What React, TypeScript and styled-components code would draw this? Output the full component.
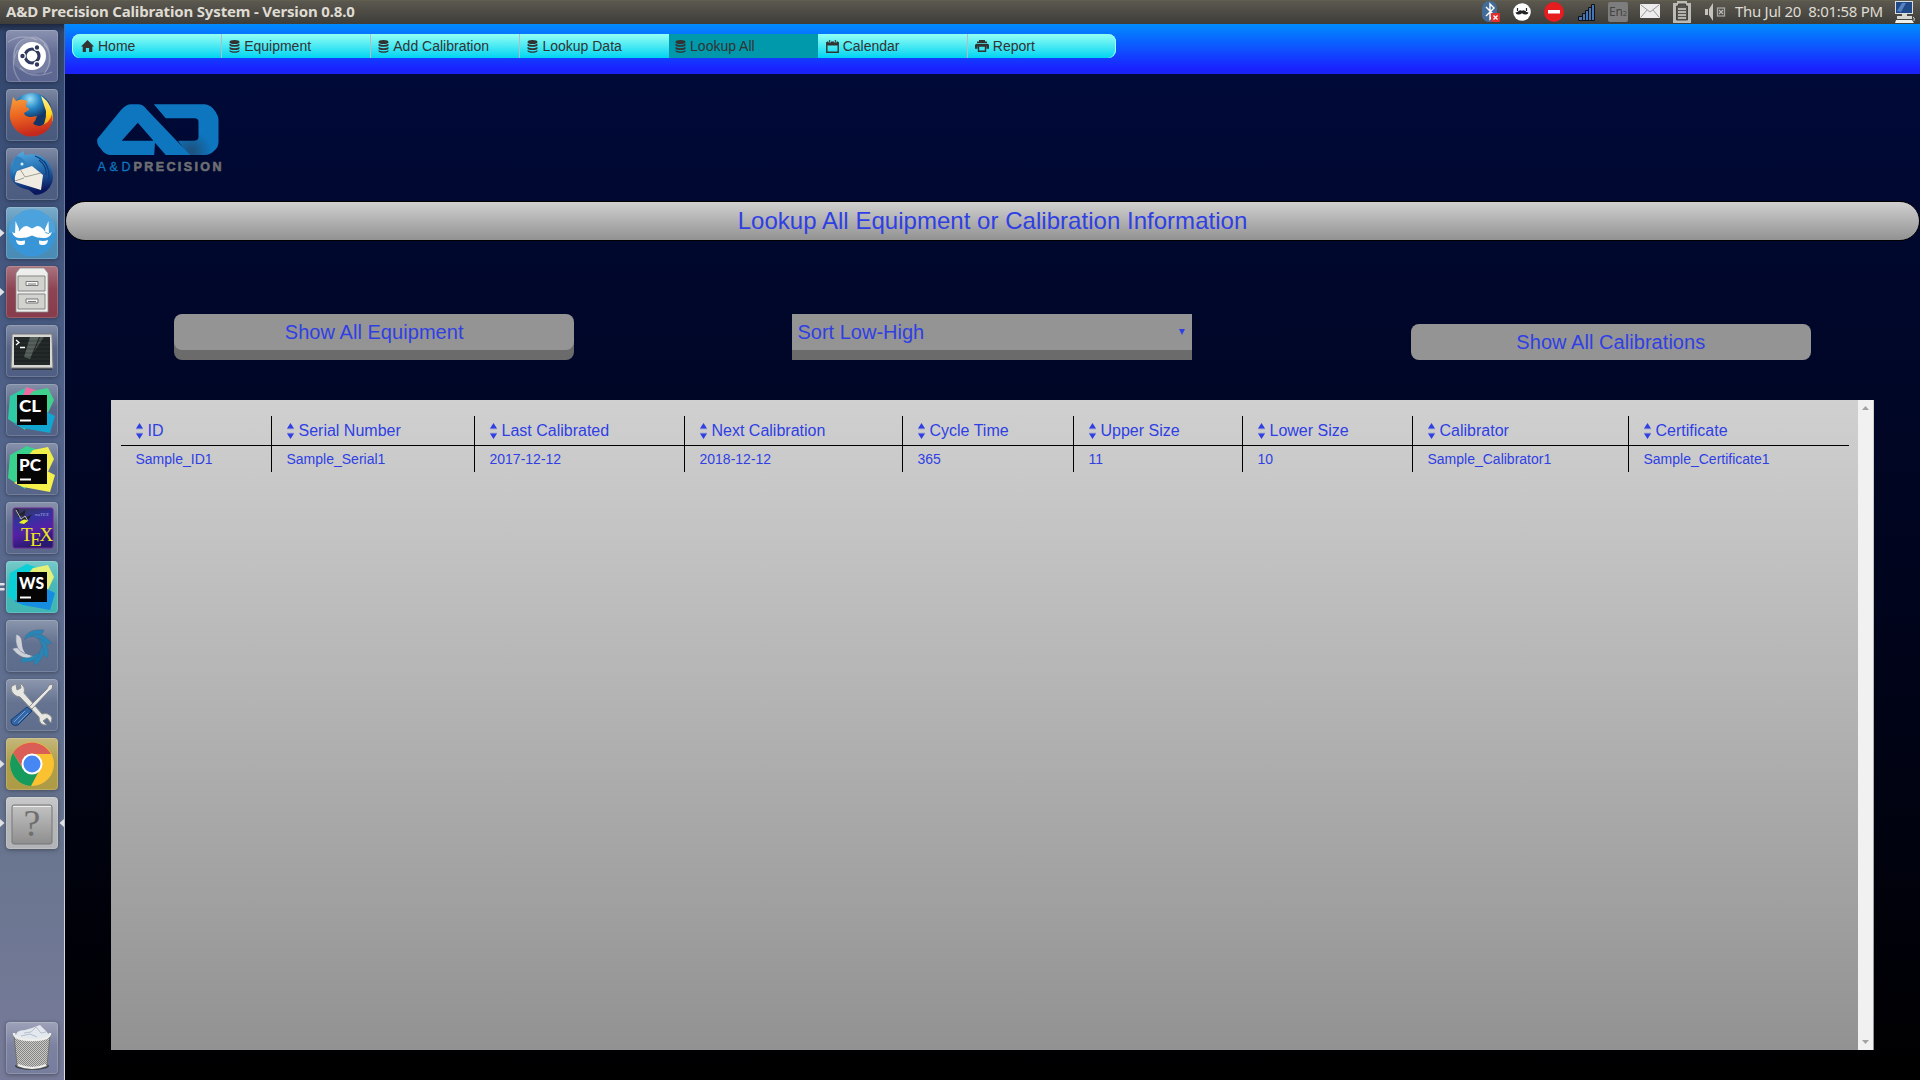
import React from 'react';
import styled, { createGlobalStyle } from 'styled-components';

const ink = '#2f3fe4';

const Global = createGlobalStyle`
  * { box-sizing: border-box; }
  html, body { margin: 0; padding: 0; overflow: hidden; background: #000; }
  body { font-family: "Liberation Sans", Arial, sans-serif; }
  button { font-family: inherit; border: 0; padding: 0; margin: 0; }
  svg { display: block; flex: none; }
`;

const Desktop = styled.div`
  width: 1920px;
  height: 1080px;
  display: flex;
  flex-direction: column;
  overflow: hidden;
`;

const Panel = styled.header`
  height: 24px;
  flex: none;
  display: flex;
  align-items: center;
  justify-content: space-between;
  padding: 0 5px 0 6px;
  background: linear-gradient(#66644f 0, #5b584f 1px, #3e3d39 24px);
  color: #dfdbd2;
  font-family: "Noto Sans", "Open Sans", sans-serif;
`;

const WindowTitle = styled.div`
  font-size: 15px;
  line-height: 23px;
  height: 24px;
  font-weight: 700;
  letter-spacing: -0.16px;
  white-space: nowrap;
`;

const Tray = styled.div`
  display: flex;
  align-items: center;
  height: 24px;
`;

const Clock = styled.div`
  width: 149px;
  height: 24px;
  margin: 0 11px 0 9px;
  font-size: 15px;
  line-height: 23px;
  letter-spacing: -0.3px;
  white-space: pre;
`;

const Workspace = styled.div`
  flex: 1;
  min-height: 0;
  display: flex;
`;

const Launcher = styled.nav`
  width: 65px;
  flex: none;
  display: flex;
  flex-direction: column;
  gap: 7px;
  padding: 6px 0 6px 6px;
  border-right: 1px solid;
  border-image: linear-gradient(#536a94, #8d97ae 50%, #dcdfe6 90%) 1;
  background: linear-gradient(#1c2740 0, #31456b 8px, #3b4f77 120px, #52638a 400px, #5e6e90 620px, #69758f 830px, #777b99 100%);
`;

const Tile = styled.div<{ $tint: string; $last?: boolean }>`
  position: relative;
  width: 52px;
  height: 52px;
  flex: none;
  margin-top: ${(p) => (p.$last ? 'auto' : '0')};
  border-radius: 4px;
  background: linear-gradient(rgba(255, 255, 255, 0.3), rgba(255, 255, 255, 0.06) 45%, rgba(255, 255, 255, 0.02)), ${(p) => p.$tint};
  box-shadow: inset 0 0 0 1px rgba(255, 255, 255, 0.17), 0 1px 4px rgba(0, 0, 0, 0.35);
`;

const Pip = styled.svg<{ $side: 'left' | 'right' }>`
  position: absolute;
  top: 21px;
  ${(p) => (p.$side === 'left' ? 'left: -6px;' : 'right: -6px;')}
`;

const Page = styled.main`
  flex: 1;
  min-width: 0;
  display: flex;
  flex-direction: column;
  background: linear-gradient(#000a38 50px, #00072b 260px, #00041c 55%, #000);
`;

const NavStrip = styled.div`
  height: 50px;
  flex: none;
  padding: 10px 7px 0;
  background: linear-gradient(#008cff, #1a22ff 90%, #1a22f4);
`;

const Menu = styled.div`
  width: 1044px;
  height: 24px;
  display: grid;
  grid-template-columns: repeat(7, 1fr);
  overflow: hidden;
  border-radius: 8px;
  background: linear-gradient(#94fff4, #00d4f2);
  box-shadow: inset 1px 0 #a5fbf6, inset -1px 0 #a5fbf6;
`;

const MenuItem = styled.div<{ $active?: boolean; $rule?: boolean }>`
  display: flex;
  align-items: center;
  gap: 4px;
  padding-left: ${(p) => (p.$active ? '6.5px' : p.$rule ? '7px' : '8px')};
  color: #333;
  font-size: 14px;
  line-height: 24px;
  white-space: nowrap;
  background: ${(p) => (p.$active ? '#0099ab' : 'none')};
  border-left: ${(p) => (p.$rule ? '1px solid #b5bcbf' : '0')};
  &:first-child { padding-left: 9px; }
`;

const Brand = styled.div`
  padding: 29px 0 0 31px;
  height: 127px;
  flex: none;
`;

const Banner = styled.h1`
  height: 40px;
  flex: none;
  margin: 0;
  border: 1px solid #000;
  border-radius: 20px;
  background: linear-gradient(#d0d0d0, #929292);
  color: ${ink};
  font-size: 24px;
  font-weight: 400;
  letter-spacing: 0.03px;
  line-height: 38px;
  text-align: center;
`;

const Controls = styled.div`
  display: grid;
  grid-template-columns: repeat(3, 1fr);
  justify-items: center;
  flex: none;
  height: 159px;
  padding-top: 73px;
`;

const Action = styled.button<{ $pressed?: boolean }>`
  width: 400px;
  height: 36px;
  margin-top: ${(p) => (p.$pressed ? '10px' : '0')};
  border-radius: 8px;
  background: #949494;
  box-shadow: ${(p) => (p.$pressed ? 'none' : '0 10px #6b6b6b')};
  color: ${ink};
  font-size: 20px;
  letter-spacing: 0.05px;
  line-height: 36px;
`;

const Sort = styled.div`
  width: 400px;
  height: 36px;
  display: flex;
  align-items: center;
  justify-content: space-between;
  padding: 0 7px 0 5px;
  background: #949494;
  box-shadow: 0 10px #6b6b6b;
  color: ${ink};
  font-size: 20px;
  line-height: 36px;
`;

const Results = styled.section`
  width: 1763px;
  height: 650px;
  flex: none;
  margin-left: 46px;
  display: flex;
  padding-right: 1px;
  background: linear-gradient(#d0d0d0, #929292);
`;

const Sheet = styled.div`
  flex: 1;
  padding: 16px 9px 0 10px;
`;

const Grid = styled.table`
  width: 1728px;
  table-layout: fixed;
  border-collapse: collapse;
  color: ${ink};
  text-align: left;
`;

const HeadCell = styled.th`
  height: 29px;
  padding: 1px 0 0 15px;
  border-left: 1px solid #000;
  border-bottom: 1px solid #000;
  font-size: 16px;
  font-weight: 400;
  line-height: 27px;
  vertical-align: top;
  white-space: nowrap;
  &:first-child { border-left: 0; padding-left: 14.5px; }
`;

const HeadLabel = styled.div`
  display: flex;
  height: 27px;
  align-items: center;
  gap: 4px;
`;

const Cell = styled.td`
  height: 26px;
  padding: 0 0 0 15px;
  border-left: 1px solid #000;
  font-size: 14px;
  line-height: 26px;
  white-space: nowrap;
  &:first-child { border-left: 0; padding-left: 14.5px; }
`;

const Scroller = styled.div`
  width: 15px;
  display: flex;
  flex-direction: column;
  align-items: center;
  justify-content: space-between;
  padding: 6px 0;
  background: #f1f1f1;
`;

const HomeIcon = () => (
  <svg width="13" height="12" viewBox="0 0 13 12" fill="#333">
    <path d="M6.5 0 0 6.4h1.7V12h3.2V8h3.2v4h3.2V6.4H13z" />
  </svg>
);
const DatabaseIcon = () => (
  <svg width="11" height="13" viewBox="0 0 11 13" fill="#333">
    <ellipse cx="5.5" cy="2" rx="5" ry="2" />
    <path d="M.5 3.800q5 2.600 10 0v1.400c0 2-10 2-10 0zM.5 7q5 2.600 10 0v1.400c0 2-10 2-10 0zM.5 10.200q5 2.600 10 0V11c0 2.400-10 2.400-10 0z" />
  </svg>
);
const CalendarIcon = () => (
  <svg width="13" height="13" viewBox="0 0 13 13">
    <path d="M1 1.5h11v4H1z" fill="#333" />
    <path d="M.8 2v10.2h11.4V2" fill="none" stroke="#333" strokeWidth="1.4" />
    <path d="M3.7 0v2.6M9.3 0v2.6" stroke="#66e9ef" strokeWidth="2.6" />
    <path d="M3.7 0v2.6M9.3 0v2.6" stroke="#333" strokeWidth="1" />
  </svg>
);
const PrintIcon = () => (
  <svg width="14" height="12" viewBox="0 0 14 12">
    <path d="M4 0h6v1.5h2V3H2V1.5h2zM1.500 3.800h11l1.500 1v4h-2.700V6H2.700v2.800H0v-4z" fill="#333" />
    <path d="M3.5 6h7v5.300h-7z" fill="none" stroke="#333" strokeWidth="1.4" />
  </svg>
);
const SortIcon = () => (
  <svg width="8" height="16" viewBox="0 0 8 16" fill={ink}>
    <path d="M3.500 0 7 5.500H0zM3.500 16 0 10.500h7z" />
    <path d="M0 5.500h7v.8H0zM0 9.700h7v.8H0z" opacity=".35" />
  </svg>
);

const Logo = () => (
  <svg width="128" height="70" viewBox="96 103 128 70">
    <defs>
      <radialGradient id="fold" gradientUnits="userSpaceOnUse" cx="191" cy="152" r="21">
        <stop offset="0.15" stopColor="#1c5483" />
        <stop offset="1" stopColor="#0d76bf" />
      </radialGradient>
    </defs>
    <path fill="url(#fold)" d="M153.800 104.300H205Q211 105 215 111q3.500 5 3.500 9v22q0 5-4 8.500-4.500 4.500-10 4.500H188L178 140.700h15.500q5 0 5-4V122q0-3.700-4-3.700H165.700z" />
    <path fill="#0d76bf" fillRule="evenodd" d="M97.200 142V139L121 110q5-5.700 10-5.700h7q5 0 9 5.400L190.200 155H165.700L155 142.700 154.200 155H111q-6 0-10-6-3.800-4-3.800-7zM137.800 122.700 121.700 140.700H153.500z" />
    <g fontFamily="Liberation Sans" fontSize="12.500">
      <text x="97.500" y="171" fill="#0d76bf" stroke="#0d76bf" strokeWidth=".3" textLength="33">A&amp;D</text>
      <text x="133.500" y="171" fontWeight="700" fill="#6d6e71" stroke="#6d6e71" strokeWidth=".6" textLength="88" lengthAdjust="spacing">PRECISION</text>
    </g>
  </svg>
);

const Art = ({ children }: { children: React.ReactNode }) => (
  <svg width="52" height="52" viewBox="0 0 52 52">{children}</svg>
);

const Ubuntu = () => (
  <Art>
    <path d="M7 34Q4 12 24 8 45 6 44 28 47 34 40 42L28 44 14 40z" fill="#fff" opacity=".14" />
    <g fill="none" stroke="#fff" strokeOpacity=".26" strokeWidth="1.200">
      <path d="M8 30Q6 7 30 7 46 14 43 34M2 12Q16 3 31 10M14 51Q2 36 12 20M14 38Q26 50 46 42M38 14Q50 28 38 44" />
    </g>
    <circle cx="26" cy="26" r="14" fill="#fff" />
    <circle cx="26" cy="26" r="7" fill="none" stroke="#30395f" strokeWidth="3.200" />
    <g fill="#30395f" stroke="#fff" strokeWidth="1.200">
      <circle cx="16.500" cy="26" r="2.800" /><circle cx="31" cy="17.500" r="2.800" /><circle cx="31" cy="34.500" r="2.800" />
    </g>
  </Art>
);
const Firefox = () => (
  <Art>
    <defs>
      <radialGradient id="globe" cx=".45" cy=".15"><stop stopColor="#9ce0f7" /><stop offset=".5" stopColor="#2586c6" /><stop offset="1" stopColor="#123565" /></radialGradient>
      <linearGradient id="fox" y2="1" x2=".2"><stop stopColor="#f9a13c" /><stop offset=".5" stopColor="#ec6420" /><stop offset="1" stopColor="#c5281c" /></linearGradient>
      <linearGradient id="tail" y2="1" x2="0"><stop stopColor="#fff39a" /><stop offset=".5" stopColor="#ffd21e" /><stop offset="1" stopColor="#ee7a1b" /></linearGradient>
    </defs>
    <circle cx="26" cy="24" r="20" fill="url(#globe)" />
    <path d="M35 7Q47 15 47 31 42 42 32 44 41 34 40 22z" fill="url(#tail)" />
    <path d="M7 8 10 12Q15 9 21 12L20 18Q24 19 23 21L18 24Q19 28 25 28L31 27 29 32Q24 36 34 37 44 34 46 25 49 36 38 44 23 52 11 42 1 32 5 18z" fill="url(#fox)" />
  </Art>
);
const Thunderbird = () => (
  <Art>
    <defs><linearGradient id="bird" y2="1" x2=".2"><stop stopColor="#58b3e8" /><stop offset=".55" stopColor="#2168ac" /><stop offset="1" stopColor="#0b185d" /></linearGradient></defs>
    <path d="M13 6 18 3 18 7Q38 3 44 18 50 30 44 39 38 47 29 47L23 42Q7 39 4 27 3 13 13 6z" fill="url(#bird)" />
    <path d="M11 23 26 18 37 27 35 42 9 34Q8 29 11 23z" fill="#f0ece2" />
    <path d="M14 21 19 29 35 25M18 30 9 33" fill="none" stroke="#8d8a80" strokeWidth=".8" />
    <path d="M33 12q8 6 7 15M38 13q7 9 4 21M29 8q6 2 11 8" fill="none" stroke="#0d3d7e" strokeWidth="1.300" />
    <path d="M10 8Q18 9 21 17L12 21 7 26Q5 15 10 8z" fill="#2f82bf" /><circle cx="16" cy="16" r="1.500" fill="#d8ecf9" />
  </Art>
);
const Viking = () => (
  <Art>
    <circle cx="26" cy="26" r="23.500" fill="#3896d8" />
    <path d="M2.500 26a23.500 23.500 0 0 1 47 0Q26 20 2.500 26z" fill="#6fb9e6" opacity=".35" />
    <path fill="#fff" d="M9.500 14 13 22 12.500 26 9 27zM42.500 14 39 22 39.500 26 43 27zM6 25Q11 28 15 22 19 17.500 23 20L26 21.500 29 20Q33 17.500 37 22 41 28 46 25 44 31.500 37 31 31 31 26 28.500 21 31 15 31 8 31.500 6 25zM10 33q4 1.500 9 .5v2q0 2.500-3 2.500h-2q-3.500-.5-4-5zM42 33q-4 1.500-9 .5v2q0 2.500 3 2.500h2q3.500-.5 4-5z" />
  </Art>
);
const Files = () => (
  <Art>
    <path d="M10 7 14 2H38L42 7V46H10z" fill="#eeeeec" stroke="#888" strokeWidth=".8" />
    <path d="M12 10H39V25H12zM12 28H39V43H12z" fill="#d2d2cf" stroke="#858582" />
    <path d="M20 15.500h12v4H20zM20 33h12v4H20z" fill="#f7f7f7" stroke="#777" /><path d="M22 18h8M22 35.500h8" stroke="#777" />
  </Art>
);
const Terminal = () => (
  <Art>
    <path d="M6 40h40v5H6z" fill="#24262b" opacity=".7" />
    <path d="M6 9H46L47 43H5z" fill="#d7d7d3" stroke="#777" /><path d="M8 12H44V40H8z" fill="#232a29" />
    <path d="M24 12H33L24 34 18 32z" fill="#a6b1aa" opacity=".4" /><path d="M34 12h4L28 27z" fill="#a6b1aa" opacity=".3" />
    <path d="M8 16h36M8 20h36M8 24h36M8 28h36M8 32h36M8 36h36" stroke="#000" strokeOpacity=".25" />
    <path d="m10 15 3 2.500-3 2.500M14 22.500h5" fill="none" stroke="#fff" strokeWidth="1.300" />
  </Art>
);

interface BadgeProps { label: string; a: string; b: string; c: string; d: string }
const Badge = ({ label, a, b, c, d }: BadgeProps) => (
  <Art>
    <path d="M4 12 21 3 31 12 19 46 2 35z" fill={a} />
    <path d="M20 3 33 7 28 14 16 14z" fill={d} />
    <path d="M27 7 42 4 48 16 40 33 20 15z" fill={b} />
    <path d="M35 25 49 32 44 49 17 44 8 40z" fill={c} />
    <rect x="11" y="11" width="30" height="30" fill="#050505" />
    <path d="M14 35.500h11v2H14z" fill="#fff" />
    <text x="13" y="27.500" fontFamily="Lato" fontWeight="900" fontSize="17.500" fill="#fff" textLength={label === 'WS' ? 25 : 22} lengthAdjust="spacingAndGlyphs">{label}</text>
  </Art>
);
const Tex = () => (
  <Art>
    <defs><linearGradient id="tex" x2=".3" y2="1"><stop stopColor="#34383f" /><stop offset=".35" stopColor="#3332a0" /><stop offset=".65" stopColor="#5420a6" /><stop offset="1" stopColor="#281a70" /></linearGradient></defs>
    <rect x="7" y="6" width="40" height="40" rx="2" fill="url(#tex)" stroke="#6e2796" />
    <path d="M11 7 13 14 18 10 17 18 23 15 19 21" fill="none" stroke="#222" strokeWidth="2" />
    <path d="M10 8l5 9 4-3 3 5" fill="none" stroke="#bbb" />
    <path d="M13 21q5-6 9-2l-4 3z" fill="#e9f02b" />
    <text x="29" y="14" fontSize="5" fontStyle="italic" fontFamily="Liberation Serif" fill="#a5a4cf">naTEX</text>
    <g fontFamily="Liberation Serif" fontSize="19" fill="#f0e818"><text x="15" y="39">T</text><text x="24" y="44">E</text><text x="33.500" y="39">X</text></g>
  </Art>
);
const blades = [0, 45, 90, 135, 180, 225, 270];
const Swirl = () => (
  <Art>
    {blades.map((angle) => (
      <path
        key={angle}
        d="M-8 -6Q-5 -18 12 -16 10 -10 4 -10 -3 -10 -8 -6z"
        transform={`translate(26 26) rotate(${angle})`}
        fill={angle >= 225 ? '#cdd0d6' : '#2686b5'}
        stroke="#55678a"
        strokeWidth=".5"
      />
    ))}
  </Art>
);
const Tools = () => (
  <Art>
    <path d="M6 7 10 5 11 11 15 9 14 4Q20 8 18 14L36 35Q43 33 46 39L45 44 41 39 37 42 41 46Q33 47 33 38L14 18Q6 17 5 9z" fill="#e6e7e3" stroke="#8a8c8a" />
    <path d="m23 28 18-18 2-4 4-1-1 5-3 2-17 18z" fill="#e7e7e5" stroke="#777" strokeWidth=".8" />
    <path d="M21 28 26 32 12 46Q5 48 5 41z" fill="#3465a4" stroke="#183c73" /><path d="m19 32-11 11M22 34 12 44" stroke="#779fd0" />
  </Art>
);
const Chrome = () => (
  <Art>
    <circle cx="26" cy="26" r="22" fill="#fac230" />
    <path d="M7 15A22 22 0 0 1 45 16H26L16 29z" fill="#db5e56" /><path d="M7 15A22 22 0 0 0 25 48L34 31 26 35 17 31z" fill="#179b5c" />
    <circle cx="26" cy="26" r="10.500" fill="#fff" /><circle cx="26" cy="26" r="8.500" fill="#4687f4" />
  </Art>
);
const Unknown = () => (
  <Art>
    <defs><linearGradient id="plate" x2="0" y2="1"><stop stopColor="#c3c3c3" /><stop offset="1" stopColor="#8e8e8e" /></linearGradient></defs>
    <rect x="6" y="8" width="40" height="39" rx="2" fill="url(#plate)" stroke="#777" /><path d="M7 9.500h38" stroke="#ededed" />
    <text x="26" y="39" textAnchor="middle" fontFamily="Liberation Serif" fontSize="38" fill="#6f6f6f">?</text>
  </Art>
);
const Trash = () => (
  <Art>
    <defs><pattern id="mesh" width="2" height="2" patternUnits="userSpaceOnUse"><rect width="2" height="2" fill="#c9c9c7" /><path d="M0 0h1v1H0zM1 1h1v1H1z" fill="#858583" /></pattern></defs>
    <ellipse cx="26" cy="44" rx="17" ry="4" fill="#222" opacity=".65" />
    <path d="M8 13 11 44Q26 50 41 44L44 13z" fill="url(#mesh)" stroke="#70716f" />
    <path d="M10 15Q9 8 19 8L26 6 34 3 40 9 44 14Q26 22 10 15z" fill="#e3e7ee" />
    <path d="m18 11 7-1 5-5 5 6 5-1M15 14l9-2 7 3" fill="none" stroke="#b8c0cf" />
    <path d="M8 11Q8 18 26 18T44 11" fill="none" stroke="#ededeb" strokeWidth="2.500" /><path d="M12 43Q26 49 40 43" fill="none" stroke="#efefed" strokeWidth="2" />
  </Art>
);

type Launch = { art: React.ReactNode; tint: string; running?: 1 | 2; focused?: boolean };
const apps: Launch[] = [
  { art: <Ubuntu />, tint: '#59648f' },
  { art: <Firefox />, tint: '#45567c' },
  { art: <Thunderbird />, tint: '#48597f' },
  { art: <Viking />, tint: '#4589b4', running: 1 },
  { art: <Files />, tint: '#853848', running: 1 },
  { art: <Terminal />, tint: '#4b5b80' },
  { art: <Badge label="CL" a="#2fc9a3" b="#40d18c" c="#12a5d0" d="#ee6aa0" />, tint: '#4f5f83' },
  { art: <Badge label="PC" a="#38d18e" b="#f1ee4c" c="#f6f04a" d="#38d18e" />, tint: '#536286' },
  { art: <Tex />, tint: '#566488' },
  { art: <Badge label="WS" a="#0bcfd7" b="#e6ef78" c="#168de0" d="#0bcfd7" />, tint: '#3eb3b3', running: 2 },
  { art: <Swirl />, tint: '#596989' },
  { art: <Tools />, tint: '#5c6b8b' },
  { art: <Chrome />, tint: '#ac9942', running: 1 },
  { art: <Unknown />, tint: '#b1b2b5', running: 1, focused: true },
];

const menu = [
  { label: 'Home', icon: <HomeIcon /> },
  { label: 'Equipment', icon: <DatabaseIcon />, rule: true },
  { label: 'Add Calibration', icon: <DatabaseIcon />, rule: true },
  { label: 'Lookup Data', icon: <DatabaseIcon />, rule: true },
  { label: 'Lookup All', icon: <DatabaseIcon />, active: true },
  { label: 'Calendar', icon: <CalendarIcon /> },
  { label: 'Report', icon: <PrintIcon />, rule: true },
];

const columns = [
  { title: 'ID', value: 'Sample_ID1', width: 150 },
  { title: 'Serial Number', value: 'Sample_Serial1', width: 203 },
  { title: 'Last Calibrated', value: '2017-12-12', width: 210 },
  { title: 'Next Calibration', value: '2018-12-12', width: 218 },
  { title: 'Cycle Time', value: '365', width: 171 },
  { title: 'Upper Size', value: '11', width: 169 },
  { title: 'Lower Size', value: '10', width: 170 },
  { title: 'Calibrator', value: 'Sample_Calibrator1', width: 216 },
  { title: 'Certificate', value: 'Sample_Certificate1', width: 221 },
];

const TrayIcons = () => (
  <svg width="246" height="24" viewBox="1480 0 246 24">
    <rect x="1482" y="1" width="15" height="21" rx="7" fill="#426b98" />
    <path d="m1486 7 8 8-4 4V4l4 4-8 8" fill="none" stroke="#fff" strokeWidth="1.400" />
    <rect x="1491" y="13" width="9" height="9" rx="1" fill="#e12d2d" /><path d="m1493.500 15.500 4 4m0-4-4 4" stroke="#fff" strokeWidth="1.300" />
    <circle cx="1522" cy="12" r="8.800" fill="#fff" />
    <path d="M1517.500 8v3M1526.500 8v3" stroke="#222" strokeWidth="1.200" />
    <path d="M1515.500 12.500q2 0 3.500-1.800 1.500-1 3 0 1.500-1 3 0 1.500 1.800 3.500 1.800-.5 2.200-3 2-2 0-3.500-1.200-1.500 1.200-3.500 1.200-2.500.2-3-2z" fill="#222" />
    <circle cx="1554" cy="12" r="10" fill="#e51d20" /><path d="M1548 10h12v3.500h-12z" fill="#fff" />
    <g fill="#4674b8" stroke="#111" strokeWidth="1"><path d="M1578.500 16.500h4v4h-4zM1582.500 13.500h3v7h-3zM1585.500 10.500h3v10h-3zM1588.500 7.500h3v13h-3zM1591.500 4.500h3v16h-3z" /></g>
    <rect x="1608" y="2" width="20" height="20" rx="2" fill="#7d7d7d" />
    <text x="1609" y="16" fontSize="12" fontFamily="Noto Sans" fill="#444" textLength="18">En<tspan fontSize="7.500">2</tspan></text>
    <rect x="1640" y="4" width="20" height="14" rx="1" fill="#ececec" /><path d="m1641 5 9 7 9-7M1641 17l6-7m12 7-6-7" fill="none" stroke="#999" />
    <path d="M1677 1h10v2h4v20h-18V3h4z" fill="#bcbab5" /><path d="M1678.500 4v2h-2v14h11V6h-2V4z" fill="#55534d" stroke="#44423d" /><path d="M1678 9h8M1678 12h8M1678 15h8M1678 18h8" stroke="#d4d2ce" strokeWidth="1.500" />
    <path d="M1705 9h3v6h-3zM1709 9l4-6v18l-4-6z" fill="#c5c3bd" /><rect x="1717.500" y="8" width="7" height="8" fill="none" stroke="#a8a6a0" strokeWidth="1.300" /><path d="m1719 10 4 4m0-4-4 4" stroke="#bbb" strokeWidth="1.300" />
  </svg>
);

const SessionIcon = () => (
  <svg width="20" height="22" viewBox="0 0 20 22">
    <rect x=".5" y=".5" width="17" height="12" fill="#204a87" stroke="#ddd" /><path d="m2 10 5-8h4l-5 9z" fill="#5682bf" />
    <path d="M7 13h5v2H7zM2 15h15v3H2z" fill="#d6d6d2" /><path d="M1 19h16l2 3H0z" fill="#efefec" /><path d="M18 16q2 0 1 4" stroke="#ccc" fill="none" />
  </svg>
);

export default function App() {
  return (
    <Desktop>
      <Global />
      <Panel>
        <WindowTitle>A&amp;D Precision Calibration System - Version 0.8.0</WindowTitle>
        <Tray>
          <TrayIcons />
          <Clock>Thu Jul 20  8:01:58 PM</Clock>
          <SessionIcon />
        </Tray>
      </Panel>
      <Workspace>
        <Launcher>
          {apps.map((app, i) => (
            <Tile key={i} $tint={app.tint}>
              {app.art}
              {app.running && (
                <Pip $side="left" width="5" height="10" viewBox="0 0 5 10" fill="#dfe1e5">
                  <path d={app.running === 1 ? 'M0 1 4.500 5 0 9z' : 'M0 1h4l1 1-1 1.500H0zM0 6h4l1 1-1 1.500H0z'} />
                </Pip>
              )}
              {app.focused && (
                <Pip $side="right" width="5" height="10" viewBox="0 0 5 10" fill="#dfe1e5"><path d="M5 1 .5 5 5 9z" /></Pip>
              )}
            </Tile>
          ))}
          <Tile $tint="#747b9b" $last><Trash /></Tile>
        </Launcher>
        <Page>
          <NavStrip>
            <Menu>
              {menu.map((m) => (
                <MenuItem key={m.label} $active={m.active} $rule={m.rule}>{m.icon}{m.label}</MenuItem>
              ))}
            </Menu>
          </NavStrip>
          <Brand><Logo /></Brand>
          <Banner>Lookup All Equipment or Calibration Information</Banner>
          <Controls>
            <Action>Show All Equipment</Action>
            <Sort>
              Sort Low-High
              <svg width="6" height="6" viewBox="0 0 6 6" fill={ink}><path d="M0 0h6L3 6z" /></svg>
            </Sort>
            <Action $pressed>Show All Calibrations</Action>
          </Controls>
          <Results>
            <Sheet>
              <Grid>
                <colgroup>{columns.map((c) => <col key={c.title} style={{ width: c.width }} />)}</colgroup>
                <thead>
                  <tr>
                    {columns.map((c) => (
                      <HeadCell key={c.title}><HeadLabel><SortIcon />{c.title}</HeadLabel></HeadCell>
                    ))}
                  </tr>
                </thead>
                <tbody>
                  <tr>{columns.map((c) => <Cell key={c.title}>{c.value}</Cell>)}</tr>
                </tbody>
              </Grid>
            </Sheet>
            <Scroller>
              <svg width="7" height="4" viewBox="0 0 7 4" fill="#a3a3a3"><path d="M3.500 0 7 4H0z" /></svg>
              <svg width="7" height="4" viewBox="0 0 7 4" fill="#a3a3a3"><path d="M0 0h7L3.500 4z" /></svg>
            </Scroller>
          </Results>
        </Page>
      </Workspace>
    </Desktop>
  );
}
